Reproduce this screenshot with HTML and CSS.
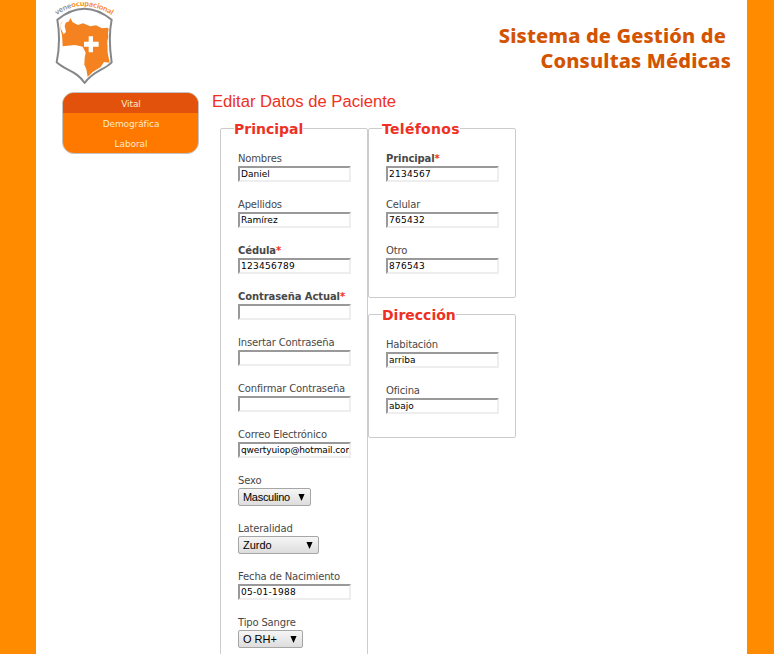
FILE: index.html
```html
<!DOCTYPE html>
<html lang="es">
<head>
<meta charset="utf-8">
<title>Editar Datos de Paciente</title>
<link rel="stylesheet" href="styles.css">
</head>
<body>
<div class="page">
  <header class="header">
    <svg class="logo" viewBox="60 0 210 255" role="img" aria-label="veneocupacional">
      <defs><path id="arc" d="M80 45Q160 -10 248 47"/></defs>
      <text class="logo-text"><textPath href="#arc" textLength="176" lengthAdjust="spacingAndGlyphs"><tspan class="grey">vene</tspan><tspan class="orange">ocupacional</tspan></textPath></text>
      <path class="shield" d="M82 59Q163 -7 245 59C239 88 235 119 245 187C219 213 192 211 164 249C140 212 108 213 80 187C90 137 89 98 82 59Z"/>
      <path class="map" d="M101 61L91 72L93 87L101 103L108 96L104 78L107 68L117 64L121 54L128 67L144 75L159 70L181 79L198 76L216 85L233 83L236 87L234 98L235 110L232 124L233 158L237 178L239 188L222 186L212 201L188 216L173 231L169 208L163 194L164 173L167 158L158 140L135 135L98 139L96 105L92 89L91 74Z"/>
      <path class="cross" d="M176 109h13v16h17v15h-17v17h-13v-17h-14v-15h14z"/>
    </svg>
    <h1 class="title"><span class="line first">Sistema de Gestión de</span><span class="line second">Consultas Médicas</span></h1>
  </header>
  <div class="body">
    <ul class="menu">
      <li class="active">Vital</li>
      <li>Demográfica</li>
      <li>Laboral</li>
    </ul>
    <main class="main">
      <h2>Editar Datos de Paciente</h2>
      <form class="columns">
        <fieldset>
          <legend>Principal</legend>
          <div class="field"><label>Nombres</label><input value="Daniel"></div>
          <div class="field"><label>Apellidos</label><input value="Ramírez"></div>
          <div class="field required"><label>Cédula<em>*</em></label><input class="number" value="123456789"></div>
          <div class="field required"><label>Contraseña Actual<em>*</em></label><input></div>
          <div class="field"><label>Insertar Contraseña</label><input></div>
          <div class="field"><label>Confirmar Contraseña</label><input></div>
          <div class="field"><label>Correo Electrónico</label><input class="email" value="qwertyuiop@hotmail.com"></div>
          <div class="field"><label>Sexo</label><div class="select sex">Masculino<svg viewBox="0 0 7 8"><path d="M0 0h7L3.5 8z"/></svg></div></div>
          <div class="field"><label>Lateralidad</label><div class="select side">Zurdo<svg viewBox="0 0 7 8"><path d="M0 0h7L3.5 8z"/></svg></div></div>
          <div class="field"><label>Fecha de Nacimiento</label><input class="number" value="05-01-1988"></div>
          <div class="field"><label>Tipo Sangre</label><div class="select blood">O RH+<svg viewBox="0 0 7 8"><path d="M0 0h7L3.5 8z"/></svg></div></div>
        </fieldset>
        <div class="column">
          <fieldset>
            <legend class="wide">Teléfonos</legend>
            <div class="field required"><label>Principal<em>*</em></label><input class="number" value="2134567"></div>
            <div class="field"><label>Celular</label><input class="number" value="765432"></div>
            <div class="field"><label>Otro</label><input class="number" value="876543"></div>
          </fieldset>
          <fieldset>
            <legend>Dirección</legend>
            <div class="field"><label>Habitación</label><input value="arriba"></div>
            <div class="field"><label>Oficina</label><input value="abajo"></div>
          </fieldset>
        </div>
      </form>
    </main>
  </div>
</div>
</body>
</html>
```
FILE: styles.css
```css
* { box-sizing: border-box; }
html { height: 100%; overflow: hidden; }
body {
  margin: 0;
  height: 100%;
  overflow: hidden;
  background: #ff8c00;
  font-family: "DejaVu Sans", sans-serif;
  font-size: 10px;
  color: #484848;
}
.page { width: 711px; height: 100%; margin-left: 36px; background: #fff; overflow: hidden; }
.header { display: flex; justify-content: space-between; height: 92px; padding: 0 16px 0 14px; }
.logo { width: 70px; height: 85px; }
.logo-text { font: bold 22px "Lato", sans-serif; }
.grey { fill: #8c8c8c; }
.orange { fill: #f58220; }
.shield { fill: #fff; stroke: #85878a; stroke-width: 6; stroke-linejoin: round; }
.map { fill: #f58220; }
.cross { fill: #fff; }
.title {
  margin: 23px 0 0;
  text-align: right;
  font: 800 20px/25px "Noto Sans", sans-serif;
  letter-spacing: 0.16px;
  color: #d35400;
}
.line { display: block; white-space: nowrap; }
.first { margin-right: 5px; }
.body { display: flex; }
.menu {
  flex: none;
  width: 137px;
  height: 62px;
  margin: 0 0 0 26px;
  padding: 0;
  list-style: none;
  border: 1px solid #c4c4c4;
  border-radius: 12px;
  background: #ff7800;
  overflow: hidden;
  font: 9px/20px "DejaVu Sans", sans-serif;
  letter-spacing: -0.1px;
  text-align: center;
  color: #ffe9c9;
}
.menu li { height: 20px; padding: 1px 0 0 1px; }
.menu .active { background: #e2520c; }
.main { margin-left: 13px; }
h2 { margin: 0; height: 28px; font: 16.65px/19px "Liberation Sans", sans-serif; color: #ee3124; }
.columns { display: flex; align-items: flex-start; margin-left: 8px; }
fieldset {
  width: 148px;
  margin: 0 0 8px;
  padding: 15px 16px 7px 17px;
  border: 1px solid #ccc;
  border-radius: 2px;
  min-width: 0;
}
legend { margin-left: -4px; padding: 0; height: 17px; font-weight: bold; font-size: 14px; line-height: 19px; color: #ee3124; }
.wide { letter-spacing: 0.3px; }
.field { margin-bottom: 16px; }
label { display: block; height: 14px; line-height: 13px; white-space: nowrap; letter-spacing: -0.16px; }
.required label { font-weight: bold; letter-spacing: -0.1px; }
em { font-style: normal; color: #ee3124; }
input {
  display: block;
  width: 113px;
  height: 16px;
  padding: 0 0 0 1px;
  border: 2px solid;
  border-color: #999 #eee #eee #999;
  background: #fff;
  font: 9px/12px "DejaVu Sans", sans-serif;
  color: #000;
}
.number { letter-spacing: 0.28px; }
.email { letter-spacing: -0.12px; }
.select {
  display: flex;
  align-items: center;
  justify-content: space-between;
  height: 18px;
  padding: 0 5px 0 4px;
  border: 1px solid #a6a6a6;
  border-radius: 2px;
  background: linear-gradient(#f6f6f6, #ddd);
  font: 11px/16px "Liberation Sans", sans-serif;
  color: #000;
}
.select svg { width: 7px; height: 7px; }
.sex { width: 73px; letter-spacing: -0.3px; }
.side { width: 81px; }
.blood { width: 65px; }
```
